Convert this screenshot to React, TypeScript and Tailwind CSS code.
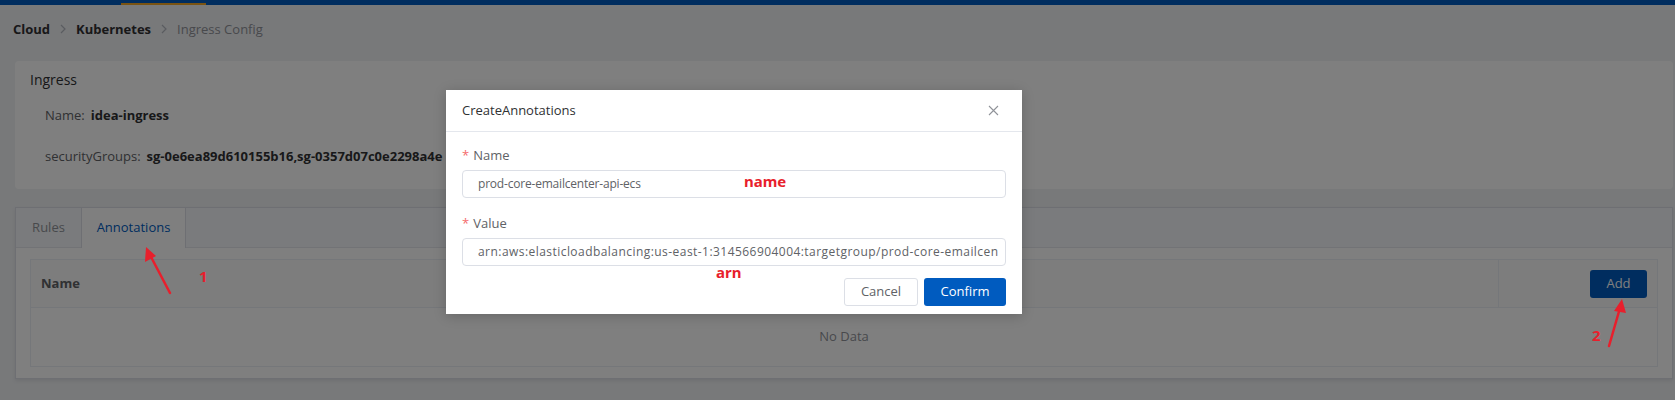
import React from "react";

const font = { fontFamily: '"Open Sans", "Liberation Sans", sans-serif' };
const redFont = { fontFamily: '"Noto Sans", sans-serif' };

function Chevron() {
  return (
    <svg width="8" height="10" viewBox="0 0 8 10" className="mx-[9px]">
      <path d="M2 1 L6 5 L2 9" fill="none" stroke="#b4b8c0" strokeWidth="1.2" />
    </svg>
  );
}

export default function App() {
  return (
    <div className="relative w-full h-[400px] overflow-hidden bg-[#f0f2f5] text-[13px]" style={font}>
      {/* top bar */}
      <div className="h-[5px] bg-[#005bbf] flex">
        <div className="ml-[121px] mt-[3px] h-[2px] w-[85px] bg-[#f5a623]" />
      </div>

      {/* breadcrumb */}
      <div className="flex items-center pl-[13px] pt-[11px] h-[37px] leading-[18px]">
        <span className="font-bold text-[#303133]">Cloud</span>
        <Chevron />
        <span className="font-bold text-[#303133]">Kubernetes</span>
        <Chevron />
        <span className="text-[#909399]">Ingress Config</span>
      </div>

      {/* ingress card */}
      <div className="ml-[15px] mr-[2px] mt-[19px] h-[128px] bg-white rounded-[4px] pl-[15px] pt-[9px]">
        <div className="text-[14px] leading-[20px] text-[#303133]">Ingress</div>
        <div className="pl-[15px] mt-[15px] leading-[20px] text-[#606266]">
          Name:<span className="ml-[6px] font-bold text-[#303133]">idea-ingress</span>
        </div>
        <div className="pl-[15px] mt-[21px] leading-[20px] text-[#606266]">
          securityGroups:<span className="ml-[6px] font-bold text-[#303133]">sg-0e6ea89d610155b16,sg-0357d07c0e2298a4e</span>
        </div>
      </div>

      {/* tabs card */}
      <div className="ml-[15px] mr-[2px] mt-[18px] h-[172px] bg-white border border-[#dcdfe6] shadow-[0_2px_4px_rgba(0,0,0,0.08)]">
        <div className="flex h-[40px] bg-[#f5f7fa] border-b border-[#e4e7ed]">
          <div className="w-[65px] flex items-center justify-center text-[#909399]">Rules</div>
          <div className="w-[105px] -mb-px bg-white border-x border-[#dcdfe6] flex items-center justify-center text-[#005bbf]">
            Annotations
          </div>
        </div>
        <div className="px-[14px] pt-[11px]">
          <div className="border border-[#ebeef5]">
            <div className="flex h-[48px] bg-[#fafafa] border-b border-[#ebeef5]">
              <div className="flex-1 flex items-center pl-[10px] font-bold text-[#606266]">Name</div>
              <div className="w-[159px] border-l border-[#ebeef5] flex items-center justify-end pr-[10px]">
                <button className="w-[57px] h-[28px] rounded-[3px] bg-[#005bbf] text-white text-[13px]">Add</button>
              </div>
            </div>
            <div className="h-[58px] flex items-center justify-center text-[#909399]">No Data</div>
          </div>
        </div>
      </div>

      {/* overlay */}
      <div className="absolute inset-0 bg-black/50" />

      {/* modal */}
      <div className="absolute left-[446px] top-[90px] w-[576px] h-[224px] bg-white shadow-[0_2px_12px_rgba(0,0,0,0.2)]">
        <div className="h-[42px] flex items-center justify-between pl-[16px] pr-[23px] border-b border-[#e4e7ed]">
          <span className="text-[13px] text-[#303133]">CreateAnnotations</span>
          <svg width="11" height="11" viewBox="0 0 11 11">
            <path d="M1 1 L10 10 M10 1 L1 10" stroke="#909399" strokeWidth="1.1" />
          </svg>
        </div>
        <div className="px-[16px] pt-[13px]">
          <div className="leading-[20px] text-[#606266] text-[13px]">
            <span className="text-[#f56c6c] mr-[4px]">*</span>Name
          </div>
          <div className="mt-[5px] h-[28px] border border-[#dcdfe6] rounded-[4px] flex items-center pl-[15px] text-[12px] tracking-[-0.2px] text-[#606266] overflow-hidden whitespace-nowrap">
            prod-core-emailcenter-api-ecs
          </div>
          <div className="mt-[15px] leading-[20px] text-[#606266] text-[13px]">
            <span className="text-[#f56c6c] mr-[4px]">*</span>Value
          </div>
          <div className="mt-[5px] h-[28px] border border-[#dcdfe6] rounded-[4px] flex items-center pl-[15px] text-[12px] tracking-[0.45px] text-[#606266] overflow-hidden whitespace-nowrap">
            arn:aws:elasticloadbalancing:us-east-1:314566904004:targetgroup/prod-core-emailcen
          </div>
          <div className="flex justify-end gap-[6px] mt-[12px]">
            <button className="w-[74px] h-[28px] border border-[#dcdfe6] rounded-[3px] bg-white text-[#606266] text-[13px]">Cancel</button>
            <button className="w-[82px] h-[28px] rounded-[3px] bg-[#005bbf] text-white text-[13px]">Confirm</button>
          </div>
        </div>
      </div>

      {/* red annotations */}
      <span className="absolute left-[744px] top-[171px] text-[15px] leading-[20px] font-bold text-[#e81f2c]" style={redFont}>name</span>
      <span className="absolute left-[716px] top-[262px] text-[15px] leading-[20px] font-bold text-[#e81f2c]" style={redFont}>arn</span>
      <span className="absolute left-[199px] top-[266px] text-[15px] leading-[20px] font-bold text-[#e81f2c]" style={redFont}>1</span>
      <span className="absolute left-[1592px] top-[325px] text-[15px] leading-[20px] font-bold text-[#e81f2c]" style={redFont}>2</span>
      <svg className="absolute left-0 top-0" width="1675" height="400">
        <line x1="170" y1="293" x2="150" y2="255" stroke="#e81f2c" strokeWidth="2.5" strokeLinecap="round" />
        <path d="M146 247 L145 262 L156 256 Z" fill="#e81f2c" />
        <line x1="1609" y1="346" x2="1620" y2="308" stroke="#e81f2c" strokeWidth="2.5" strokeLinecap="round" />
        <path d="M1622 299 L1614 311 L1626 313 Z" fill="#e81f2c" />
      </svg>
    </div>
  );
}
